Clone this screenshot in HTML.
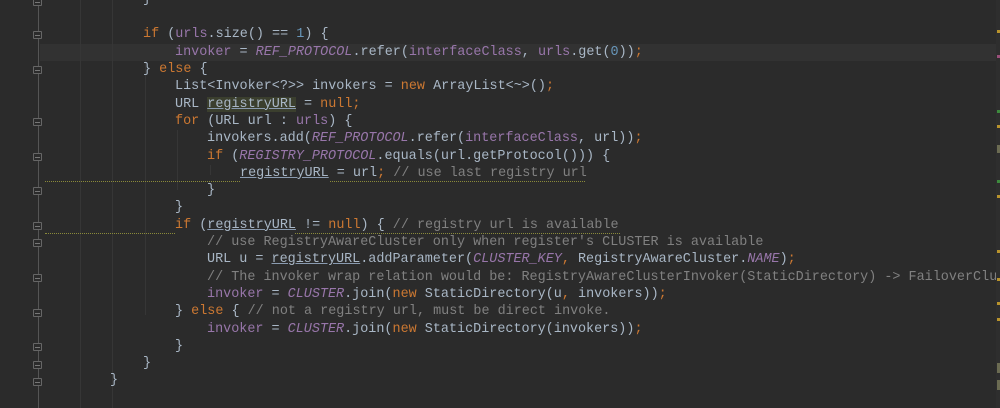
<!DOCTYPE html>
<html><head><meta charset="utf-8"><style>
html,body{margin:0;padding:0;overflow:hidden;}
body{width:1000px;height:408px;background:#2b2b2b;position:relative;font-family:"Liberation Mono",monospace;font-size:13.45px;color:#a9b7c6;}
#w{position:absolute;left:0;top:0;width:1000px;height:408px;overflow:hidden;}
#code{position:absolute;left:0;top:0;width:996px;height:408px;overflow:hidden;}
.cur{position:absolute;left:40px;right:0;top:44px;height:17.3px;background:#323232;}
.gl{position:absolute;left:38px;top:0;width:1px;height:408px;background:#555;}
.ig{position:absolute;top:0;width:1px;height:408px;background:#363636;}
.l{position:absolute;left:0;height:17.3px;line-height:17.3px;white-space:pre;}
.k{color:#cc7832}.f{color:#9876aa;font-style:italic}.v{color:#9876aa}.n{color:#6897bb}.c{color:#808080}
.u{text-decoration:underline;text-decoration-color:#8a9bb0}
.h{background:#3b3f2e;}
.fold{position:absolute;left:33px;width:9px;height:8px;border:1px solid #666;border-radius:1px;background:#2b2b2b;box-sizing:border-box;}
.fold:after{content:"";position:absolute;left:1px;right:1px;top:3px;height:1px;background:#777;}
.wv{position:absolute;height:2px;border-bottom:1px dotted #8a8a3a;}
.sb{position:absolute;left:997px;width:3px;height:3px;}
</style></head><body><div id="w">
<div class="cur"></div>
<div class="gl"></div>
<div class="ig" style="left:80px"></div>
<div class="ig" style="left:112px"></div>
<div class="ig" style="left:145px;top:60px;height:255px"></div>
<div class="ig" style="left:177px;top:130px;height:60px"></div>
<div class="ig" style="left:210px;top:165px;height:10px"></div>

<div class="fold" style="top:-2px"></div>
<div class="fold" style="top:31px"></div>
<div class="fold" style="top:66px"></div>
<div class="fold" style="top:118px"></div>
<div class="fold" style="top:153px"></div>
<div class="fold" style="top:187px"></div>
<div class="fold" style="top:222px"></div>
<div class="fold" style="top:239px"></div>
<div class="fold" style="top:274px"></div>
<div class="fold" style="top:309px"></div>
<div class="fold" style="top:343px"></div>
<div class="fold" style="top:361px"></div>
<div class="fold" style="top:378px"></div>

<div id="code">
<div class="l" style="top:-9px;left:143px">}</div>
<div class="l" style="top:26.4px;left:143px"><span class="k">if</span> (<span class="v">urls</span>.size() == <span class="n">1</span>) {</div>
<div class="l" style="top:43.7px;left:175px"><span class="v">invoker</span> = <span class="f">REF_PROTOCOL</span>.refer(<span class="v">interfaceClass</span>, <span class="v">urls</span>.get(<span class="n">0</span>))<span class="k">;</span></div>
<div class="l" style="top:61px;left:143px">} <span class="k">else</span> {</div>
<div class="l" style="top:78.3px;left:175px">List&lt;Invoker&lt;?&gt;&gt; invokers = <span class="k">new</span> ArrayList&lt;~&gt;()<span class="k">;</span></div>
<div class="l" style="top:95.6px;left:175px">URL <span class="u h">registryURL</span> = <span class="k">null;</span></div>
<div class="l" style="top:112.9px;left:175px"><span class="k">for</span> (URL url : <span class="v">urls</span>) {</div>
<div class="l" style="top:130.2px;left:207px">invokers.add(<span class="f">REF_PROTOCOL</span>.refer(<span class="v">interfaceClass</span>, url))<span class="k">;</span></div>
<div class="l" style="top:147.5px;left:207px"><span class="k">if</span> (<span class="f">REGISTRY_PROTOCOL</span>.equals(url.getProtocol())) {</div>
<div class="l" style="top:164.8px;left:240px"><span class="u">registryURL</span> = url<span class="k">;</span> <span class="c">// use last registry url</span></div>
<div class="l" style="top:182.1px;left:207px">}</div>
<div class="l" style="top:199.4px;left:175px">}</div>
<div class="l" style="top:216.7px;left:175px"><span class="k">if</span> (<span class="u">registryURL</span> != <span class="k">null</span>) { <span class="c">// registry url is available</span></div>
<div class="l" style="top:234px;left:207px"><span class="c">// use RegistryAwareCluster only when register's CLUSTER is available</span></div>
<div class="l" style="top:251.3px;left:207px">URL u = <span class="u">registryURL</span>.addParameter(<span class="f">CLUSTER_KEY</span><span class="k">,</span> RegistryAwareCluster.<span class="f">NAME</span>)<span class="k">;</span></div>
<div class="l" style="top:268.6px;left:207px"><span class="c">// The invoker wrap relation would be: RegistryAwareClusterInvoker(StaticDirectory) -&gt; FailoverClu</span></div>
<div class="l" style="top:285.9px;left:207px"><span class="v">invoker</span> = <span class="f">CLUSTER</span>.join(<span class="k">new</span> StaticDirectory(u<span class="k">,</span> invokers))<span class="k">;</span></div>
<div class="l" style="top:303.2px;left:175px">} <span class="k">else</span> { <span class="c">// not a registry url, must be direct invoke.</span></div>
<div class="l" style="top:320.5px;left:207px"><span class="v">invoker</span> = <span class="f">CLUSTER</span>.join(<span class="k">new</span> StaticDirectory(invokers))<span class="k">;</span></div>
<div class="l" style="top:337.8px;left:175px">}</div>
<div class="l" style="top:355.1px;left:143px">}</div>
<div class="l" style="top:372.4px;left:110px">}</div>
</div>

<div class="wv" style="left:45px;width:195px;top:179px"></div>
<div class="wv" style="left:330px;width:255px;top:179px"></div>
<div class="wv" style="left:45px;width:130px;top:231px"></div>
<div class="wv" style="left:295px;width:325px;top:231px"></div>

<div style="position:absolute;left:996px;top:0;width:4px;height:408px;background:#2e2e2e"></div>
<div class="sb" style="top:30px;background:#b8932c"></div>
<div class="sb" style="top:55px;background:#9a4f7a"></div>
<div class="sb" style="top:110px;background:#3d8a3d"></div>
<div class="sb" style="top:125px;background:#b8932c"></div>
<div class="sb" style="top:145px;background:#6b6b52;height:8px"></div>
<div class="sb" style="top:180px;background:#3d8a3d"></div>
<div class="sb" style="top:195px;background:#b8932c"></div>
<div class="sb" style="top:250px;background:#b8932c"></div>
<div class="sb" style="top:278px;background:#b8932c"></div>
<div class="sb" style="top:302px;background:#b8932c"></div>
<div class="sb" style="top:318px;background:#b8932c"></div>
<div class="sb" style="top:363px;background:#6b6b52;height:10px"></div>
<div class="sb" style="top:380px;background:#6b6b52;height:10px"></div>
</div></body></html>
